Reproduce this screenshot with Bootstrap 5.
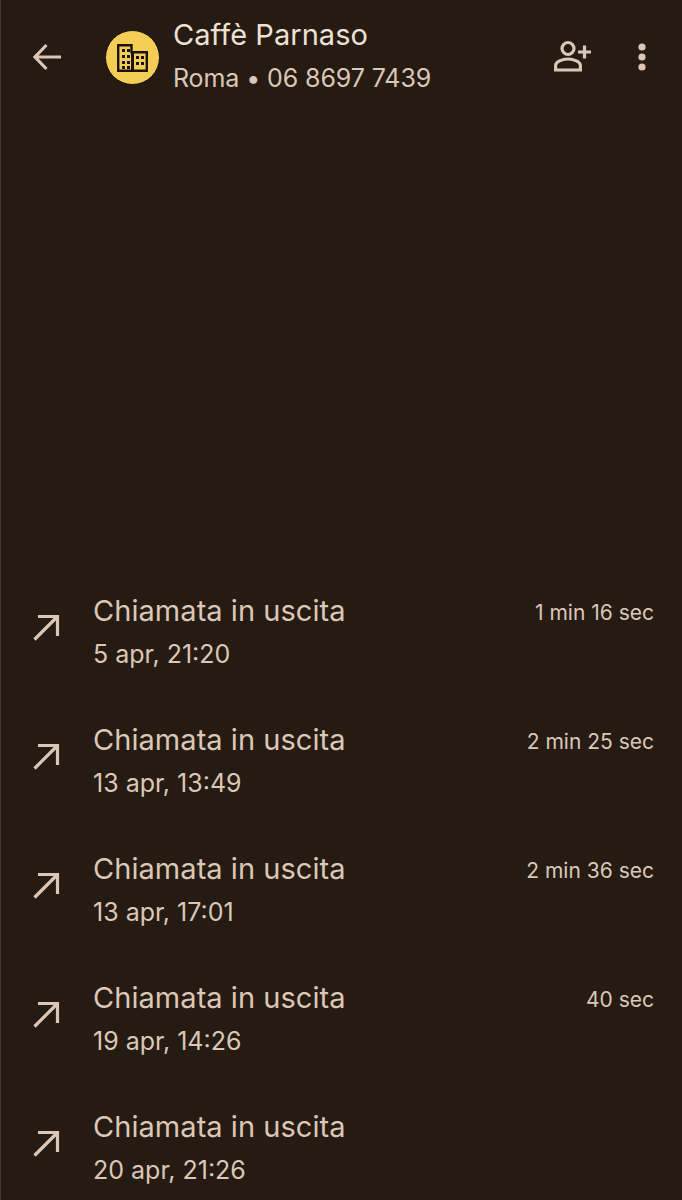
<!DOCTYPE html>
<html lang="it">
<head>
    <meta charset="UTF-8">
    <meta name="viewport" content="width=device-width, initial-scale=1.0">
    <title>Caffè Parnaso</title>
    <link href="https://cdn.jsdelivr.net/npm/bootstrap@5.3.0/dist/css/bootstrap.min.css" rel="stylesheet">
    <style>
        body { background: #251b13; font-family: Inter, "Liberation Sans", sans-serif; overflow: hidden; }
        .screen { height: 1200px; border-left: 1px solid #3f3730; color: #dcc7b6; }
        .top-bar { height: 115px; padding: 13px 0 0 32px; }
        .avatar { width: 55px; height: 55px; background: #f4cd55; border: 1px solid #15100a; border-radius: 50%; margin: 17px 13px 0 44px; }
        .contact-name { font-size: 29px; line-height: 44px; color: #efe0d4; letter-spacing: .05px; }
        .contact-sub { font-size: 25px; line-height: 42px; letter-spacing: -.1px; }
        .top-icon { margin-top: 26px; }
        .dots-icon { margin-left: 44px; margin-right: 34px; }
        .call-list { margin-top: 474px; }
        .call-row { height: 129px; padding-left: 32px; padding-right: 28px; }
        .call-arrow { width: 27px; height: 27px; margin-top: 25px; margin-right: 33px; }
        .call-title { font-size: 29px; line-height: 44px; letter-spacing: .05px; }
        .call-time { font-size: 25px; line-height: 42px; }
        .call-length { font-size: 21px; line-height: 48px; }
    </style>
</head>
<body>
    <div class="screen">
        <!-- header -->
        <div class="top-bar d-flex">
            <svg class="top-icon flex-shrink-0" width="28" height="36" viewBox="0 0 28 36" fill="none" stroke="#dcc7b6" stroke-width="3.2">
                <path d="M2 18H28M13.5 6 2 18 13.5 30"/>
            </svg>
            <div class="avatar d-flex align-items-center justify-content-center flex-shrink-0">
                <svg width="31" height="28" viewBox="0 0 31 28">
                    <path d="M1.2 1.2H14.5V8.2H29.8V26.8H1.2Z" fill="none" stroke="#1c140c" stroke-width="2.4"/>
                    <path d="M5 5h3v3H5zM10 5h3v3h-3zM5 11h3v3H5zM10 11h3v3h-3zM5 17h3v3H5zM10 17h3v3h-3zM5 22h3v3H5zM10 22h3v3h-3zM14 8h3v19h-3zM19 12h3v3h-3zM19 18h3v3h-3zM24 12h3v3h-3zM24 18h3v3h-3z" fill="#1c140c"/>
                </svg>
            </div>
            <div class="flex-grow-1">
                <div class="contact-name">Caffè Parnaso</div>
                <div class="contact-sub">Roma • 06 8697 7439</div>
            </div>
            <svg class="top-icon flex-shrink-0" width="38" height="36" viewBox="0 0 38 36" fill="none" stroke="#dcc7b6" stroke-width="3.2">
                <circle cx="14" cy="9.5" r="6"/>
                <path d="M1.6 31V26.5C1.6 23 8 20 14 20S26.4 23 26.4 26.5V31Z"/>
                <path d="M24 13H37M30.5 6.500V19.500"/>
            </svg>
            <svg class="top-icon dots-icon flex-shrink-0" width="12" height="36" viewBox="0 0 12 36" fill="#dcc7b6">
                <circle cx="6" cy="8" r="3.6"/>
                <circle cx="6" cy="18" r="3.6"/>
                <circle cx="6" cy="28" r="3.6"/>
            </svg>
        </div>

        <!-- chiamate -->
        <div id="call-list" class="call-list"></div>
    </div>

    <script>
        const calls = [
            ['5 apr, 21:20', '1 min 16 sec'],
            ['13 apr, 13:49', '2 min 25 sec'],
            ['13 apr, 17:01', '2 min 36 sec'],
            ['19 apr, 14:26', '40 sec'],
            ['20 apr, 21:26', '']
        ];
        const callList = document.getElementById('call-list');
        calls.forEach(call => {
            const row = document.createElement('div');
            row.className = 'call-row d-flex';
            row.innerHTML = `
                <svg class="call-arrow flex-shrink-0" viewBox="0 0 27 27" fill="none" stroke="#dcc7b6" stroke-width="3.2">
                    <path d="M1.500 25.500 24.500 2.500M5 2.500H24.500V22"/>
                </svg>
                <div class="flex-grow-1">
                    <div class="call-title">Chiamata in uscita</div>
                    <div class="call-time">${call[0]}</div>
                </div>
                <div class="call-length">${call[1]}</div>
            `;
            callList.appendChild(row);
        });
    </script>
    <script src="https://cdn.jsdelivr.net/npm/bootstrap@5.3.0/dist/js/bootstrap.bundle.min.js"></script>
</body>
</html>
